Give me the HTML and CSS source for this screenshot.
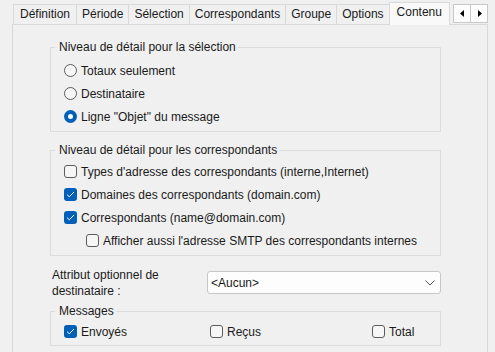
FILE: index.html
```html
<!DOCTYPE html>
<html lang="fr">
<head>
  <meta charset="UTF-8">
  <title>Contenu</title>
  <link rel="stylesheet" href="styles.css">
</head>
<body>
  <div class="tab-strip">
    <div class="tabs">
      <span class="tab">Définition</span>
      <span class="tab">Période</span>
      <span class="tab">Sélection</span>
      <span class="tab">Correspondants</span>
      <span class="tab">Groupe</span>
      <span class="tab">Options</span>
      <span class="tab active">Contenu</span>
    </div>
    <div class="scroller">
      <span class="scroll-btn"><svg width="5" height="7" viewBox="0 0 5 7"><path d="M4 0v7L0 3.5z" fill="#000"/></svg></span>
      <span class="scroll-btn"><svg width="5" height="7" viewBox="0 0 5 7"><path d="M1 0v7l4-3.5z" fill="#000"/></svg></span>
    </div>
  </div>

  <div class="panel">
    <fieldset class="group group-selection">
      <legend>Niveau de détail pour la sélection</legend>
      <div class="option"><span class="radio"></span>Totaux seulement</div>
      <div class="option"><span class="radio"></span>Destinataire</div>
      <div class="option"><span class="radio checked"></span>Ligne "Objet" du message</div>
    </fieldset>

    <fieldset class="group group-corr">
      <legend>Niveau de détail pour les correspondants</legend>
      <div class="option"><span class="check"></span>Types d'adresse des correspondants (interne,Internet)</div>
      <div class="option"><span class="check checked"><svg width="9" height="7" viewBox="0 0 9 7"><path d="M1 3.6l2.3 2.2L8 1" fill="none" stroke="#fff" stroke-width="1"/></svg></span>Domaines des correspondants (domain.com)</div>
      <div class="option"><span class="check checked"><svg width="9" height="7" viewBox="0 0 9 7"><path d="M1 3.6l2.3 2.2L8 1" fill="none" stroke="#fff" stroke-width="1"/></svg></span>Correspondants (name@domain.com)</div>
      <div class="option indent"><span class="check"></span>Afficher aussi l'adresse SMTP des correspondants internes</div>
    </fieldset>

    <div class="attr-row">
      <label class="attr-label">Attribut optionnel de<br>destinataire :</label>
      <div class="select">
        <span>&lt;Aucun&gt;</span>
        <svg width="10" height="6" viewBox="0 0 10 6"><path d="M0.5 0.5l4.5 4.5 4.5-4.5" fill="none" stroke="#555" stroke-width="1"/></svg>
      </div>
    </div>

    <fieldset class="group group-messages">
      <legend>Messages</legend>
      <div class="message-row">
        <div class="option"><span class="check checked"><svg width="9" height="7" viewBox="0 0 9 7"><path d="M1 3.6l2.3 2.2L8 1" fill="none" stroke="#fff" stroke-width="1"/></svg></span>Envoyés</div>
        <div class="option"><span class="check"></span>Reçus</div>
        <div class="option"><span class="check"></span>Total</div>
      </div>
    </fieldset>
  </div>
</body>
</html>
```

FILE: styles.css
```css
/* page */
body {
  margin: 0;
  width: 495px;
  height: 352px;
  overflow: hidden;
  background: #f0f0f0;
  font-family: "Liberation Sans", Arial, sans-serif;
  font-size: 12px;
  color: #1a1a1a;
}

/* tab strip */
.tab-strip {
  display: flex;
  align-items: flex-end;
  width: 475px;
  height: 24px;
  padding-left: 13px;
}

.tabs {
  display: flex;
  align-items: flex-end;
  height: 24px;
}

.tab {
  height: 19px;
  line-height: 19px;
  padding: 0 5px;
  margin-left: -1px;
  border: 1px solid #d9d9d9;
  border-bottom: none;
  background: #f0f0f0;
  white-space: nowrap;
}

.tab:first-child {
  margin-left: 0;
  padding: 0 6px;
}

.tab.active {
  position: relative;
  z-index: 1;
  height: 22px;
  padding: 0 7px;
  margin-bottom: -1px;
  background: #f9f9f9;
}

.scroller {
  display: flex;
  align-self: flex-start;
  margin: 4px 0 0 auto;
}

.scroll-btn {
  display: flex;
  align-items: center;
  justify-content: center;
  width: 16px;
  height: 17px;
  border: 1px solid #c9c9c9;
  background: #fdfdfd;
}

.scroll-btn + .scroll-btn {
  border-left: none;
}

/* panel */
.panel {
  width: 474px;
  height: 330px;
  margin-left: 12px;
  border: 1px solid #d9d9d9;
}

.group {
  box-sizing: border-box;
  width: 391px;
  margin: 0 0 0 37px;
  padding: 0 0 0 13px;
  border: 1px solid #dcdcdc;
}

.group legend {
  margin-left: -9px;
  padding: 0 2px 0 4px;
  line-height: 16px;
}

.group-selection {
  margin-top: 14px;
  padding-top: 4px;
  padding-bottom: 3px;
}

.group-corr {
  margin-top: 10px;
  padding-top: 2px;
  padding-bottom: 3px;
}

.group-messages {
  margin-top: 4px;
  padding-top: 1px;
  padding-bottom: 2px;
}

.option {
  display: flex;
  align-items: center;
  height: 23px;
  white-space: nowrap;
}

.option.indent {
  margin-left: 22px;
}

/* radios and checkboxes */
.radio,
.check {
  box-sizing: border-box;
  display: flex;
  align-items: center;
  justify-content: center;
  flex: none;
  width: 13px;
  height: 13px;
  margin-right: 4px;
  border: 1px solid #5c5c5c;
  background: #f6f6f6;
}

.radio {
  border-radius: 50%;
}

.radio.checked {
  border: none;
  background: #005fb8;
}

.radio.checked::after {
  content: "";
  width: 5px;
  height: 5px;
  border-radius: 50%;
  background: #fff;
}

.check {
  border-radius: 3px;
}

.check.checked {
  border: none;
  background: #005fb8;
}

/* attribute row */
.attr-row {
  display: flex;
  align-items: flex-start;
  margin: 11px 0 0 39px;
}

.attr-label {
  width: 155px;
  line-height: 16px;
}

.select {
  box-sizing: border-box;
  display: flex;
  align-items: center;
  justify-content: space-between;
  width: 234px;
  height: 23px;
  margin-top: 4px;
  padding: 0 5px 0 3px;
  border: 1px solid #c6c6c6;
  border-radius: 3px;
  background: #fdfdfd;
}

/* messages */
.message-row {
  display: grid;
  grid-template-columns: 146px 162px auto;
}
```
